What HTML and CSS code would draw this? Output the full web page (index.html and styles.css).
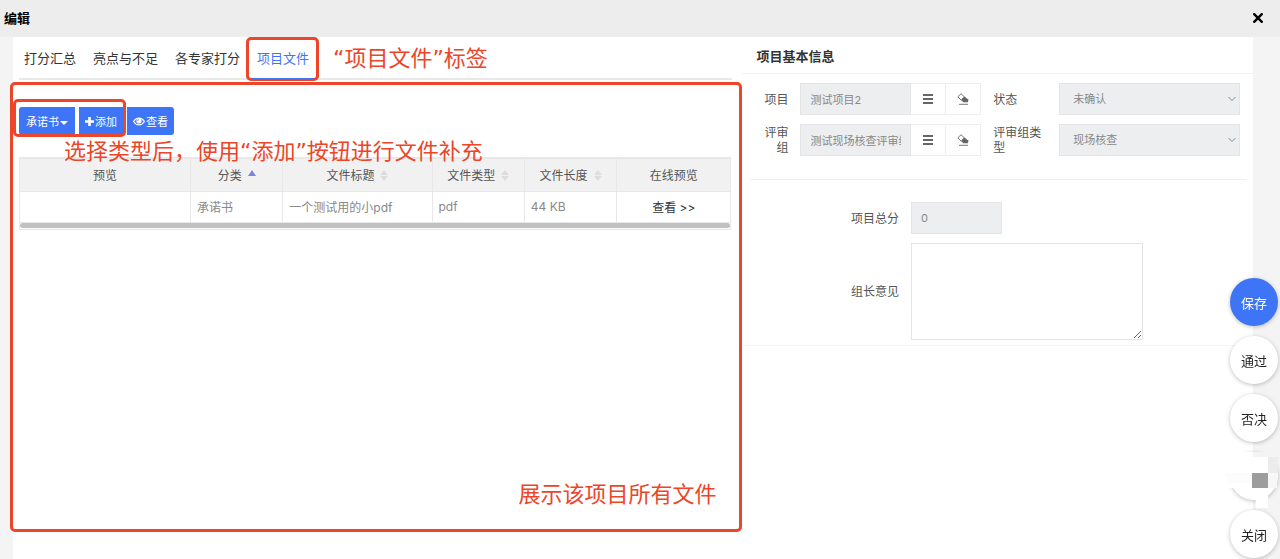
FILE: index.html
```
<!DOCTYPE html>
<html lang="zh-CN">
<head>
<meta charset="utf-8" />
<title>编辑</title>
<link rel="stylesheet" href="styles.css">
</head>
<body>
	<div class="dialog-title">
		<h1>编辑</h1>
		<button type="button" class="close" aria-label="关闭窗口">
			<svg width="12" height="12" viewBox="0 0 12 12"><path d="M2.2 2.2L9.8 9.8M9.8 2.2L2.2 9.8" stroke="#000" stroke-width="2.4" stroke-linecap="round"/></svg>
		</button>
	</div>

	<div class="wrap">
		<div class="left">
			<ul class="tabs">
				<li><a href="#">打分汇总</a></li>
				<li><a href="#">亮点与不足</a></li>
				<li><a href="#">各专家打分</a></li>
				<li class="active">
					<a href="#">项目文件</a>
					<span class="mark mark-tab"></span>
					<span class="note note-tab">“项目文件”标签</span>
				</li>
			</ul>

			<div class="tab-content">
				<div class="toolbar">
					<button type="button" class="btn first">承诺书<i class="caret"></i></button>
					<button type="button" class="btn"><svg width="9" height="9" viewBox="0 0 9 9"><path d="M4.5 0v9M0 4.5h9" stroke="#fff" stroke-width="2.6"/></svg>添加</button>
					<button type="button" class="btn last"><svg width="12" height="9" viewBox="0 0 12 9"><path d="M.6 4.5C3.3 0 8.7 0 11.4 4.5 8.7 9 3.3 9 .6 4.5z" fill="none" stroke="#fff" stroke-width="1.2"/><circle cx="6" cy="4" r="2.6" fill="#fff"/><path d="M4.6 3.9A1.5 1.5 0 0 1 6 2.5" fill="none" stroke="#3e74f6" stroke-width=".7"/></svg>查看</button>
					<span class="mark mark-add"></span>
					<span class="note note-add">选择类型后，使用“添加”按钮进行文件补充</span>
				</div>

				<div class="table-box">
					<table>
						<colgroup>
							<col class="c1"><col class="c2"><col class="c3"><col class="c4"><col class="c4"><col class="c5">
						</colgroup>
						<thead>
							<tr>
								<th>预览</th>
								<th>分类<i class="sort asc"></i></th>
								<th>文件标题<i class="sort"></i></th>
								<th>文件类型<i class="sort"></i></th>
								<th>文件长度<i class="sort"></i></th>
								<th>在线预览</th>
							</tr>
						</thead>
						<tbody>
							<tr>
								<td></td>
								<td>承诺书</td>
								<td>一个测试用的小pdf</td>
								<td>pdf</td>
								<td>44 KB</td>
								<td class="view"><a href="#">查看 &gt;&gt;</a></td>
							</tr>
						</tbody>
					</table>
					<div class="scrollbar"></div>
				</div>

				<span class="mark mark-list"></span>
				<span class="note note-list">展示该项目所有文件</span>
			</div>
		</div>

		<div class="right">
			<h2>项目基本信息</h2>
			<div class="info">
				<label for="project">项目</label>
				<div class="group">
					<input id="project" type="text" value="测试项目2" disabled>
					<button type="button" aria-label="选择项目"><svg width="10" height="10" viewBox="0 0 10 10"><path d="M0 1h10M0 5h10M0 9h10" stroke="#666" stroke-width="1.8"/></svg></button>
					<button type="button" aria-label="清除项目"><svg width="12" height="12" viewBox="0 0 12 12"><path d="M.8 3.8L4 .8l3.4 3-3.2 3.4z" fill="#fff" stroke="#777" stroke-linejoin="round"/><path d="M7.4 3.4L11.6 6.8 10.8 9.2H6.4L4.2 7.2z" fill="#666"/><path d="M2 11.3h9" stroke="#777"/></svg></button>
				</div>
				<label class="text-left" for="state">状态</label>
				<select id="state" disabled><option>未确认</option></select>

				<label for="team">评审组</label>
				<div class="group">
					<input id="team" type="text" value="测试现场核查评审组" disabled>
					<button type="button" aria-label="选择评审组"><svg width="10" height="10" viewBox="0 0 10 10"><path d="M0 1h10M0 5h10M0 9h10" stroke="#666" stroke-width="1.8"/></svg></button>
					<button type="button" aria-label="清除评审组"><svg width="12" height="12" viewBox="0 0 12 12"><path d="M.8 3.8L4 .8l3.4 3-3.2 3.4z" fill="#fff" stroke="#777" stroke-linejoin="round"/><path d="M7.4 3.4L11.6 6.8 10.8 9.2H6.4L4.2 7.2z" fill="#666"/><path d="M2 11.3h9" stroke="#777"/></svg></button>
				</div>
				<label class="text-left" for="teamType">评审组类型</label>
				<select id="teamType" disabled><option>现场核查</option></select>
			</div>
			<hr>
			<div class="opinion">
				<label for="score">项目总分</label>
				<input id="score" type="text" value="0" disabled>
				<label for="leader">组长意见</label>
				<textarea id="leader"></textarea>
			</div>
		</div>
	</div>

	<div class="float-btns">
		<button type="button" class="primary">保存</button>
		<button type="button">通过</button>
		<button type="button">否决</button>
		<button type="button" class="masked" aria-label="更多">
			<svg width="54" height="56" viewBox="0 0 54 56">
				<path d="M3 0h50v5H3z" fill="#f4f4f4"/>
				<path d="M3 0h25v5H3z" fill="#fff"/>
				<path d="M0 5h43v31H3l-3-15z" fill="#fff"/>
				<path d="M43 5h10v16H43z" fill="#ececec"/>
				<path d="M43 21h9v15h-9z" fill="#f7f7f7"/>
				<path d="M0 21h27v10H3z" fill="#fcfcfc"/>
				<path d="M30 36h13v20H31z" fill="#fff"/>
				<path d="M27 21h16v15H27z" fill="#9d9d9d"/>
			</svg>
		</button>
		<button type="button">关闭</button>
	</div>
</body>
</html>
```
FILE: styles.css
```
* {box-sizing:border-box;}
body, h1, h2, ul, hr {margin:0; padding:0;}
li {list-style:none;}
a {color:inherit; text-decoration:none;}
body, button, input, select, textarea {font-family:Inter, "Noto Sans CJK SC", sans-serif;}
body {background:#f4f4f4; font-size:12px; color:#555; min-height:100vh; display:flex; flex-direction:column;}
button {padding:0; border:0; cursor:pointer;}

.dialog-title {display:flex; justify-content:space-between; align-items:center; height:37px; padding:0 16px 2px 4px; background:#ededed;}
.dialog-title h1 {font-size:13px; line-height:20px; color:#000;}
.close {display:flex; background:none;}

.wrap {flex:1; display:flex; margin:0 27px 0 13px; background:#fff;}
.left {flex:10; min-width:0;}
.right {flex:7; min-width:0;}

/* 标签页 */
.tabs {display:flex; gap:17px; height:43px; margin:0 10px 0 6px; padding-left:5px; border-bottom:2px solid #e8e8e8; font-size:13px; line-height:42px; color:#333;}
.tabs li {position:relative; white-space:nowrap;}
.tabs .active {color:#3e74f6;}
.tabs .active:after {content:""; position:absolute; left:-5px; right:-5px; bottom:-2px; height:2px; background:#3e74f6;}
.tab-content {position:relative; min-height:452px; padding:27px 11px 0 6px;}

.toolbar {position:relative; display:flex; gap:4px; margin-bottom:22px;}
.btn {display:flex; align-items:center; height:28px; padding:0 6px; background:#3e74f6; color:#fff; font-size:11px; white-space:nowrap;}
.btn.first {border-radius:3px 0 0 3px; padding:0 7px;}
.btn.last {border-radius:0 3px 3px 0;}
.btn svg {margin-right:1px;}
.caret {margin:3px 0 0 1px; border:4px solid transparent; border-top-color:#fff; border-bottom:0;}

.table-box {border:1px solid #e8e8e8; border-top-width:2px; padding-bottom:1px;}
table {width:100%; table-layout:fixed; border-collapse:collapse;}
.c1 {width:24%;}
.c2 {width:13%;}
.c3 {width:21%;}
.c4 {width:13%;}
.c5 {width:16%;}
th {height:32px; padding:0; background:#f1f1f1; font-weight:normal; color:#555;}
td {height:31px; padding:0 6px; color:#888;}
th, td {border-right:1px solid #e8e8e8; border-bottom:1px solid #e8e8e8; white-space:nowrap;}
th:last-child, td:last-child {border-right:0;}
.view {text-align:center; color:#333;}
.sort {display:inline-block; width:8px; height:12px; margin-left:6px; vertical-align:-2px;}
.sort:before, .sort:after {content:""; display:block; border:4px solid transparent;}
.sort:before {border-top:0; border-bottom:5px solid #ddd;}
.sort:after {margin-top:1px; border-bottom:0; border-top:5px solid #ddd;}
.sort.asc:before {border-bottom-color:#7b83da; border-bottom-width:6px;}
.sort.asc:after {border-color:transparent;}
.scrollbar {height:5px; border-radius:3px; background:#c1c1c1;}

/* 右侧表单 */
.right h2 {height:37px; padding-left:14px; border-bottom:1px solid #f2f2f2; font-size:13px; line-height:38px; color:#333;}
.info {display:grid; grid-template-columns:42px 1fr 78px 1fr; gap:9px 0; padding:9px 13px 23px 16px;}
.right label {align-self:center; padding-right:12px; line-height:15px; text-align:right;}
.right .text-left {padding:0 18px 0 12px; text-align:left;}
.right input, .right select {width:100%; min-width:0; height:32px; padding:0 9px; border:1px solid #e4e4e6; border-radius:0; background:#edeef0; color:#888; font-size:11px; opacity:1;}
.right select {padding:0 13px; appearance:none; background:#edeef0 url("data:image/svg+xml,%3Csvg xmlns='http://www.w3.org/2000/svg' width='8' height='6'%3E%3Cpath d='M.5 1L4 4.5 7.5 1' fill='none' stroke='%23888'/%3E%3C/svg%3E") no-repeat right 3px center;}
.group {display:flex;}
.group input {flex:1;}
.group button {display:flex; align-items:center; justify-content:center; width:35px; border:1px solid #eee; border-left:0; background:#fff;}
.right hr {margin:0 7px 0 8px; border:0; border-top:1px solid #eee;}
.opinion {display:grid; grid-template-columns:33% 1fr; gap:9px 0; padding:22px 0 5px; border-bottom:1px solid #f4f4f4;}
.right .opinion input {width:91px;}
.opinion textarea {width:232px; height:97px; border:1px solid #e4e4e6;}

/* 悬浮按钮 */
.float-btns {position:fixed; right:2px; bottom:1px; display:flex; flex-direction:column; gap:10px;}
.float-btns button {width:48px; height:48px; border-radius:50%; background:#fff; box-shadow:0 1px 4px rgba(0,0,0,.25); color:#222; font-size:13px;}
.float-btns .primary {background:#3e74f6; color:#fff;}
.float-btns .masked {position:relative;}
.masked svg {position:absolute; left:-5px; top:0;}

/* 红色标注 */
.mark {position:absolute; border:3px solid #ec4529; border-radius:5px; pointer-events:none;}
.note {position:absolute; font-family:"DejaVu Sans", "Noto Sans CJK SC", sans-serif; font-size:22px; line-height:30px; color:#ec4529; white-space:nowrap; pointer-events:none;}
.mark-tab {left:-11px; right:-10px; top:0; bottom:-3px;}
.note-tab {left:76px; top:7px;}
.mark-add {left:-6px; top:-8px; width:113px; height:38px;}
.note-add {left:45px; top:30px;}
.mark-list {left:-3px; right:0; top:2px; height:450px;}
.note-list {right:26px; top:400px;}
```
